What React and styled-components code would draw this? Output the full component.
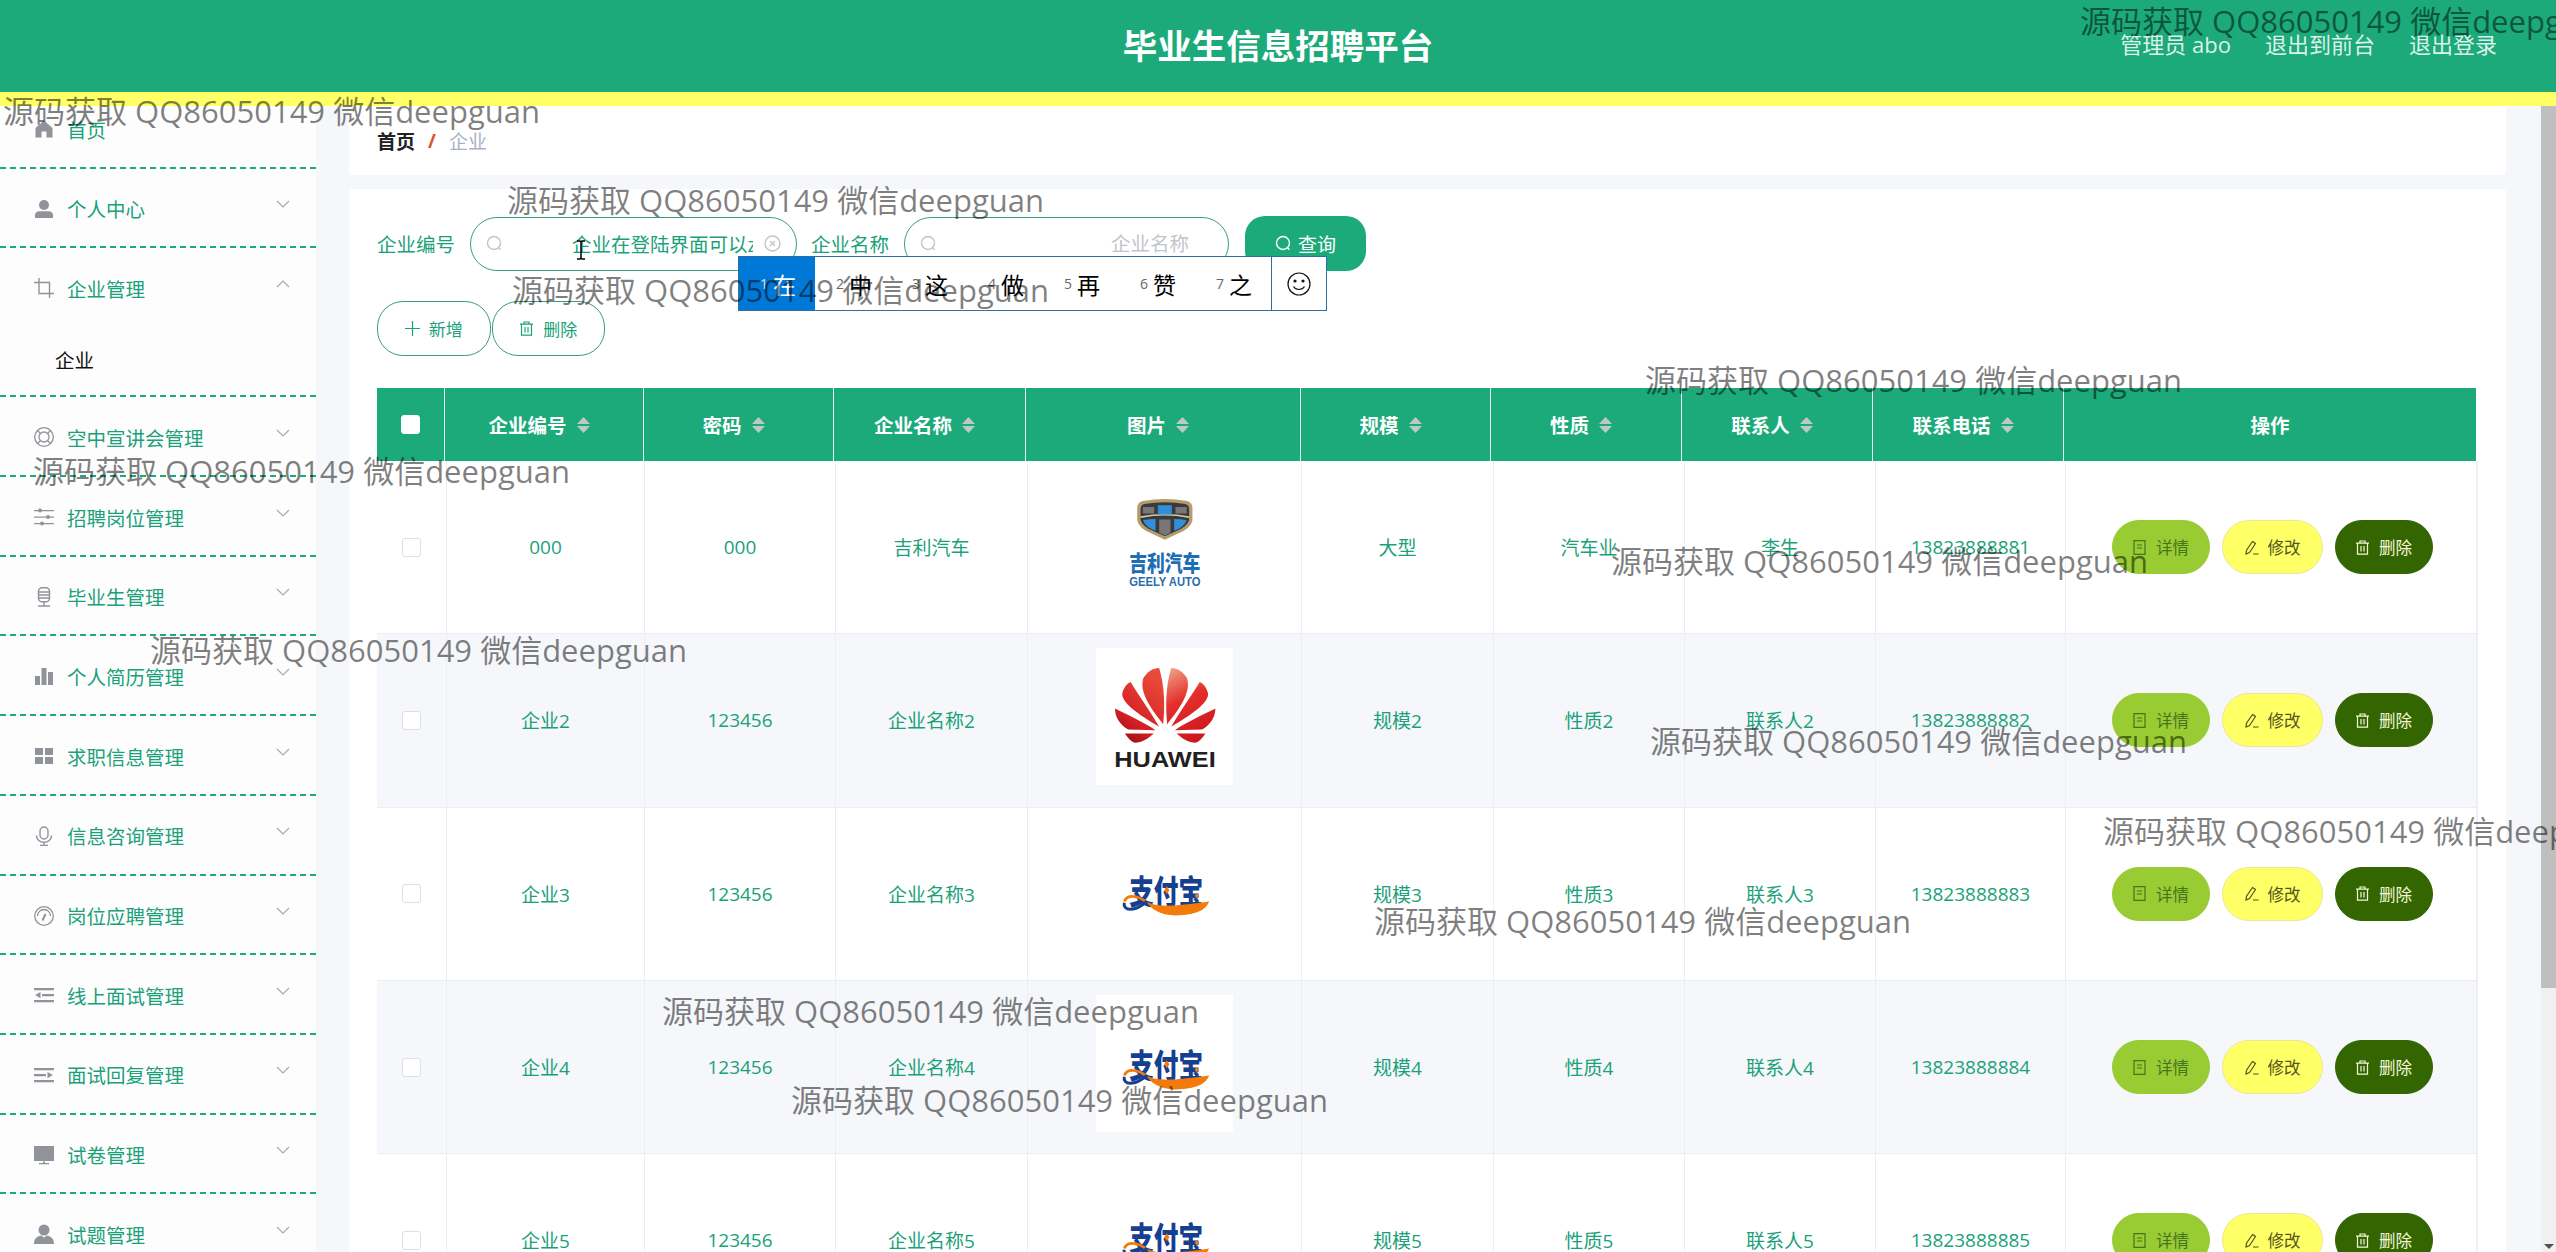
import React from 'react';
import styled, { createGlobalStyle } from 'styled-components';

const GREEN = '#1caa7a';
const TEXT_GREEN = '#1ba17a';
const FONT = '"Open Sans", "Noto Sans CJK SC", sans-serif';

const GlobalStyle = createGlobalStyle`
  html, body {
    margin: 0;
    height: 100%;
    overflow: hidden;
    font-family: ${FONT};
  }
`;

const Page = styled.div`
  position: relative;
  height: 100vh;
  overflow: hidden;
  display: flex;
  flex-direction: column;
  background: #f5f7fa;
`;

const Header = styled.header`
  position: relative;
  z-index: 2;
  flex: none;
  height: 92px;
  border-bottom: 14px solid #ffff66;
  background: ${GREEN};
  display: grid;
  grid-template-columns: 1fr auto 1fr;
  align-items: center;
`;

const Title = styled.h1`
  grid-column: 2;
  margin: 0;
  color: #fff;
  font-size: 34.5px;
  font-weight: 700;
  line-height: 1;
`;

const HeaderLinks = styled.nav`
  justify-self: end;
  display: flex;
  gap: 34px;
  padding: 0 59px 6px 0;
  color: rgba(255, 255, 255, 0.85);
  font-size: 22px;
`;

const Main = styled.div`
  flex: 1;
  min-height: 0;
  display: flex;
`;

const Sidebar = styled.aside`
  flex: none;
  width: 316px;
  margin-top: -17px;
  background: #fdfdfe;
  overflow: hidden;
`;

const MenuItem = styled.div`
  box-sizing: border-box;
  height: ${p => (p.$open ? 149 : 79.7)}px;
  border-bottom: 2px dashed ${GREEN};
  display: flex;
  flex-direction: column;
`;

const MenuRow = styled.div`
  flex: none;
  height: 78px;
  padding: 2px 26px 0 34px;
  box-sizing: border-box;
  display: flex;
  align-items: center;
  gap: 13px;
  color: ${TEXT_GREEN};
  font-size: 19.5px;
`;

const MenuLabel = styled.span`
  flex: 1;
`;

const MenuIcon = styled.svg`
  flex: none;
  width: 20px;
  height: 20px;
  color: #909399;
`;

const Chevron = styled.svg`
  flex: none;
  width: 14px;
  height: 8px;
  margin-top: -9px;
  fill: none;
  stroke: #a6a9ad;
  stroke-width: 1.2;
  transform: ${p => (p.$up ? 'rotate(180deg)' : 'none')};
`;

const SubItem = styled.div`
  padding-left: 55px;
  margin-top: 19px;
  color: #111;
  font-size: 19.5px;
`;

const Content = styled.main`
  flex: 1;
  min-width: 0;
  padding: 0 35px 0 33px;
  overflow: hidden;
`;

const Crumbs = styled.div`
  box-sizing: border-box;
  height: 69px;
  margin-bottom: 14px;
  padding: 0 28px 0 28px;
  background: #fff;
  border-radius: 4px;
  display: flex;
  align-items: center;
  gap: 13px;
  font-size: 19px;
`;

const CrumbHome = styled.span`
  color: #222;
  font-weight: 700;
`;

const CrumbSlash = styled.span`
  color: #d9532c;
  font-weight: 700;
`;

const CrumbHere = styled.span`
  color: #a8b2c5;
`;

const Card = styled.section`
  padding: 27px 28px 0 28px;
  background: #fff;
  border-radius: 4px;
`;

const SearchRow = styled.form`
  height: 55px;
  display: flex;
  align-items: center;
`;

const FieldLabel = styled.label`
  width: 78px;
  margin-right: 15px;
  color: ${TEXT_GREEN};
  font-size: 19.5px;
  white-space: nowrap;
`;

const SearchBox = styled.div`
  box-sizing: border-box;
  width: ${p => p.$width}px;
  height: 54px;
  margin-right: ${p => p.$gap}px;
  padding: 0 15px;
  display: flex;
  align-items: center;
  border: 1px solid #3b9c80;
  border-radius: 27px;
`;

const SearchInput = styled.input`
  flex: 1;
  min-width: 0;
  border: 0;
  outline: 0;
  padding: 0 0 0 ${p => p.$indent}px;
  margin-left: 0;
  background: transparent;
  color: ${TEXT_GREEN};
  font: 19.5px ${FONT};
  &::placeholder {
    color: #c0c4cc;
    opacity: 1;
  }
`;

const FieldIcon = styled.svg`
  flex: none;
  width: 17px;
  height: 17px;
  fill: none;
  stroke: #c0c4cc;
  stroke-width: 1.4;
`;

const ClearIcon = styled(FieldIcon)`
  margin-left: 11px;
`;

const SearchButton = styled.button`
  width: 121px;
  height: 55px;
  padding: 0;
  border: 0;
  border-radius: 20px;
  background: ${GREEN};
  color: #fff;
  font: 19px ${FONT};
  display: flex;
  align-items: center;
  justify-content: center;
  gap: 6px;
  svg {
    stroke: #fff;
  }
`;

const ActionRow = styled.div`
  height: 55px;
  margin-top: 30px;
  display: flex;
  gap: 1px;
`;

const OutlineButton = styled.button`
  width: 113.5px;
  height: 55px;
  padding: 0;
  border: 1px solid #3b9c80;
  border-radius: 26px;
  background: #fff;
  color: ${TEXT_GREEN};
  font: 17px ${FONT};
  display: flex;
  align-items: center;
  justify-content: center;
  gap: 9px;
`;

const Table = styled.div`
  margin-top: 32px;
`;

const HeadRow = styled.div`
  width: 2099px;
  height: 73px;
  display: grid;
  grid-template-columns: 68px 199px 190px 192px 275px 190px 191px 191px 191px 412px;
  background: ${GREEN};
`;

const HeadCell = styled.div`
  display: flex;
  align-items: center;
  justify-content: center;
  gap: 10px;
  padding-right: ${p => (p.$sorted ? 10 : 0)}px;
  color: #fff;
  font-size: 19.5px;
  font-weight: 700;
  border-right: ${p => (p.$last ? 0 : '1px solid #e4f5ef')};
`;

const BodyRow = styled.div`
  width: 2101px;
  height: 173.33px;
  box-sizing: border-box;
  display: grid;
  grid-template-columns: 70px 198px 191px 192px 274px 192px 191px 191px 190px 412px;
  background: ${p => (p.$even ? '#f5f7fb' : '#fff')};
  border-bottom: 1px solid #ebeef5;
  border-right: 2px solid #eef0f4;
`;

const BodyCell = styled.div`
  display: flex;
  align-items: center;
  justify-content: center;
  color: ${TEXT_GREEN};
  font-size: 19px;
  border-right: ${p => (p.$last ? 0 : '1px solid #ebeef5')};
`;

const Check = styled.span`
  box-sizing: border-box;
  width: 19px;
  height: 19px;
  border: 1px solid ${p => (p.$head ? '#fff' : '#dcdfe6')};
  border-radius: 3px;
  background: #fff;
`;

const SortIcon = styled.svg`
  flex: none;
  width: 13px;
  height: 16px;
  fill: #bccac4;
`;

const LogoFrame = styled.svg`
  width: 137px;
  height: 137px;
  margin-bottom: 8px;
  background: #fff;
`;

const RowActions = styled.div`
  display: flex;
  gap: 12px;
`;

const tones = {
  detail: { bg: '#99cc33', fg: '#47731f', line: '#99cc33', width: 98 },
  edit: { bg: '#ffff66', fg: '#55551f', line: '#ece79a', width: 101 },
  remove: { bg: '#336600', fg: '#f4f8d8', line: '#336600', width: 98 },
};

const Pill = styled.button`
  box-sizing: border-box;
  width: ${p => tones[p.$tone].width}px;
  height: 54px;
  padding: 0;
  border: 1px solid ${p => tones[p.$tone].line};
  border-radius: 27px;
  background: ${p => tones[p.$tone].bg};
  color: ${p => tones[p.$tone].fg};
  font: 16.5px ${FONT};
  display: flex;
  align-items: center;
  justify-content: center;
  gap: 9px;
`;

const SmallIcon = styled.svg`
  flex: none;
  width: 15px;
  height: 15px;
  fill: none;
  stroke: currentColor;
  stroke-width: 1.2;
`;

const Scrollbar = styled.div`
  flex: none;
  position: relative;
  width: 15px;
  background: #f0f0f0;
`;

const ScrollThumb = styled.div`
  height: 882px;
  background: #bfbfbf;
`;

const ScrollArrow = styled.span`
  position: absolute;
  left: 3px;
  bottom: 3px;
  border-left: 5px solid transparent;
  border-right: 5px solid transparent;
  border-top: 5px solid #505050;
`;

const Candidates = styled.div`
  position: absolute;
  z-index: 10;
  left: 738px;
  top: 256px;
  box-sizing: border-box;
  width: 589px;
  height: 55px;
  display: flex;
  background: #fff;
  border: 1px solid #2f6f9f;
`;

const Candidate = styled.div`
  flex: none;
  width: 76px;
  display: flex;
  align-items: center;
  padding-left: 21px;
  box-sizing: border-box;
  gap: 3px;
  background: ${p => (p.$active ? '#0078d7' : 'transparent')};
  color: ${p => (p.$active ? '#fff' : '#000')};
  font-size: 23px;
`;

const CandidateNo = styled.span`
  width: 10px;
  color: ${p => (p.$active ? '#cfe4f7' : '#666')};
  font-size: 14px;
`;

const EmojiCell = styled.div`
  flex: 1;
  display: flex;
  align-items: center;
  justify-content: center;
  border-left: 1px solid #2f6f9f;
`;

const Watermark = styled.div`
  position: absolute;
  z-index: 20;
  left: ${p => p.$x}px;
  top: ${p => p.$y - 21}px;
  color: rgba(0, 0, 0, 0.5);
  font-size: 31px;
  line-height: 42px;
  white-space: nowrap;
  pointer-events: none;
`;

const TextCursor = styled.svg`
  position: absolute;
  z-index: 21;
  left: 576px;
  top: 240px;
  width: 10px;
  height: 20px;
`;

const icons = {
  home: <path fill="currentColor" d="M10 1.5 1.5 9v9.5h6v-6h5v6h6V9z" />,
  user: <g fill="currentColor"><circle cx="10" cy="6" r="5" /><path d="M1 19v-3c0-2.5 2-3.8 4.5-3.8h9c2.5 0 4.5 1.300 4.500 3.800v3z" /></g>,
  crop: <path fill="none" stroke="currentColor" strokeWidth="1.400" d="M5 0v15.500h15M0 4.500h15.500V20" />,
  help: <g fill="none" stroke="currentColor" strokeWidth="1.300"><circle cx="10" cy="10" r="9.300" /><circle cx="10" cy="10" r="5" /><path d="m3.500 3.500 3 3m7 7 3 3m0-13-3 3m-7 7-3 3" /></g>,
  sliders: <g fill="currentColor"><path d="M0 3h20v1.200H0zM0 9.500h20v1.200H0zM0 16h20v1.200H0z" /><circle cx="6" cy="3.600" r="2" /><circle cx="14" cy="10.100" r="2" /><circle cx="8" cy="16.600" r="2" /></g>,
  record: <g fill="none" stroke="currentColor" strokeWidth="1.400"><rect x="4.500" y="0.800" width="11" height="14" rx="3.500" /><path d="M4.500 5h11M4.500 8h11M4.500 11h11M10 15v3.500M4 19h12" /></g>,
  chart: <path fill="currentColor" d="M1 10h5v9H1zM7.500 2h5v17h-5zM14 6h5v13h-5z" />,
  grid: <path fill="currentColor" d="M1 2h8v7H1zM11 2h8v7h-8zM1 11h8v7H1zM11 11h8v7h-8z" />,
  mic: <g fill="none" stroke="currentColor" strokeWidth="1.400"><rect x="6" y="1" width="8" height="12" rx="4" /><path d="M2.500 9.500c0 9 15 9 15 0M10 16v3.500M6 19.500h8" /></g>,
  gauge: <g fill="none" stroke="currentColor" strokeWidth="1.300"><circle cx="10" cy="10" r="9.300" /><path d="M3.500 10A6.500 6.500 0 0 1 16.500 10" /><path strokeWidth="2" d="M8.500 14.500 11.500 8" /></g>,
  fold: <path fill="currentColor" d="M0 3h20v2.200H0zM8 9h12v2.200H8zM0 15h20v2.200H0zM1 10.100 6.500 7v6.200z" />,
  unfold: <path fill="currentColor" d="M0 3h20v2.200H0zM0 9h12v2.200H0zM0 15h20v2.200H0zM19 10.100 13.500 7v6.200z" />,
  monitor: <path fill="currentColor" d="M0 1h20v15H0zM9 16.500h2V18h4v1.200H5V18h4z" />,
  person: <g fill="currentColor"><circle cx="10" cy="6" r="5.500" /><path d="M0 20c0-5 2-7 7-8.500l3 2 3-2c5 1.500 7 3.500 7 8.500z" /></g>,
};

const menu = [
  ['home', '首页', false],
  ['user', '个人中心', true],
  ['crop', '企业管理', true, true],
  ['help', '空中宣讲会管理', true],
  ['sliders', '招聘岗位管理', true],
  ['record', '毕业生管理', true],
  ['chart', '个人简历管理', true],
  ['grid', '求职信息管理', true],
  ['mic', '信息咨询管理', true],
  ['gauge', '岗位应聘管理', true],
  ['fold', '线上面试管理', true],
  ['unfold', '面试回复管理', true],
  ['monitor', '试卷管理', true],
  ['person', '试题管理', true],
];

const headers = ['企业编号', '密码', '企业名称', '图片', '规模', '性质', '联系人', '联系电话'];

const rows = [
  { id: '000', pwd: '000', name: '吉利汽车', logo: 'geely', size: '大型', kind: '汽车业', contact: '李生', phone: '13823888881' },
  { id: '企业2', pwd: '123456', name: '企业名称2', logo: 'huawei', size: '规模2', kind: '性质2', contact: '联系人2', phone: '13823888882' },
  { id: '企业3', pwd: '123456', name: '企业名称3', logo: 'alipay', size: '规模3', kind: '性质3', contact: '联系人3', phone: '13823888883' },
  { id: '企业4', pwd: '123456', name: '企业名称4', logo: 'alipay', size: '规模4', kind: '性质4', contact: '联系人4', phone: '13823888884' },
  { id: '企业5', pwd: '123456', name: '企业名称5', logo: 'alipay', size: '规模5', kind: '性质5', contact: '联系人5', phone: '13823888885' },
];

const marks = [
  [2080, 21], [3, 111], [507, 200], [512, 290], [1645, 380], [33, 471], [1611, 561],
  [150, 650], [1650, 741], [2103, 831], [1374, 921], [662, 1011], [791, 1100],
];

const SearchGlyph = () => (
  <FieldIcon viewBox="0 0 17 17"><circle cx="8" cy="8" r="6.500" /><path d="m12.500 12.800 2 2" /></FieldIcon>
);

const TrashGlyph = () => (
  <SmallIcon viewBox="0 0 15 15"><path d="M1 3.200h13M5 3V1h5v2M2.500 3.200v11h10v-11M6 6v5.500M9 6v5.500" /></SmallIcon>
);

const HuaweiPetals = () => (
  <>
    <path d="M490 1062C440 1000 420 960 430 925c10-20 30-32 48-32 17 57 17 117 12 169z" />
    <path d="M478 1070C420 1035 365 1000 367 970c3-15 13-30 25-35 28 45 63 95 86 135z" />
    <path d="M467 1080C430 1055 385 1035 345 1015c0 25 15 50 40 63z" />
    <path d="M375 1090h87c-17 15-37 28-57 28-10-3-20-13-30-28z" />
  </>
);

const HuaweiLogo = () => (
  <LogoFrame viewBox="0 0 412 412">
    <defs>
      <linearGradient id="hwLeft" gradientUnits="userSpaceOnUse" x1="350" y1="1110" x2="480" y2="930">
        <stop offset="0" stopColor="#8f0c12" />
        <stop offset="0.35" stopColor="#d51f26" />
        <stop offset="1" stopColor="#ea4a3a" />
      </linearGradient>
      <linearGradient id="hwRight" gradientUnits="userSpaceOnUse" x1="370" y1="1110" x2="480" y2="900">
        <stop offset="0" stopColor="#c9151c" />
        <stop offset="0.6" stopColor="#e42f2c" />
        <stop offset="1" stopColor="#ef9a80" />
      </linearGradient>
    </defs>
    <g transform="translate(-288 -833)">
      <g fill="url(#hwLeft)"><HuaweiPetals /></g>
      <g fill="url(#hwRight)" transform="translate(992 0) scale(-1 1)"><HuaweiPetals /></g>
    </g>
    <text x="55" y="359" fontFamily="Liberation Sans" fontWeight="700" fontSize="64" textLength="305" lengthAdjust="spacingAndGlyphs" fill="#231f20">HUAWEI</text>
  </LogoFrame>
);

const GeelyLogo = () => (
  <LogoFrame viewBox="0 0 412 412">
    <g transform="translate(0 12)">
      <path fill="#b59c6c" d="M140 66q67-12 134 0 16 4 16 22v37q-5 25-45 40l-38 18-38-18q-40-15-45-40V88q0-18 16-22z" />
      <path fill="#3a3a3c" d="M145 75q62-10 124 0 11 3 11 15v33q-5 20-40 34l-33 15-33-15q-35-14-40-34V90q0-12 11-15z" />
      <path fill="#d9c89f" d="M134 112q73-14 146 0v5q-73-14-146 0z" />
      <path fill="#77777a" d="M141 84h34v20h-34zM239 84h34v20h-34zM190 122h34v40l-17 8-17-8z" />
      <path fill="#2f8fd8" d="M186 79h42v28h-42zM141 124q18-4 38-4v36q-28-10-38-32zM273 124q-18-4-38-4v36q28-10 38-32z" />
      <text x="100" y="276" fontFamily="Noto Sans CJK SC" fontWeight="900" fontSize="64" textLength="214" lengthAdjust="spacingAndGlyphs" fill="#1f6db3">吉利汽车</text>
      <text x="100" y="321" fontFamily="Liberation Sans" fontWeight="700" fontSize="38" textLength="214" lengthAdjust="spacingAndGlyphs" fill="#2a6cab">GEELY AUTO</text>
    </g>
  </LogoFrame>
);

const AlipayLogo = () => (
  <LogoFrame viewBox="0 0 412 412">
    <text x="100" y="250" fontFamily="Noto Sans CJK SC" fontWeight="900" fontSize="100" textLength="222" lengthAdjust="spacingAndGlyphs" fill="#15408f">支付宝</text>
    <g transform="translate(0 14)">
      <path fill="#f47a0a" d="M150 226c25 20 80 18 190 2-10 27-40 40-100 42-50 0-75-20-90-44z" />
      <path fill="none" stroke="#f47a0a" strokeWidth="8" d="M150 228c-20-15-55-25-65 0" />
      <path fill="none" stroke="#15408f" strokeWidth="9" d="M85 232c-5 23 30 30 68-4" />
      <path fill="#f47a0a" d="M213 182l8 12-8 12-8-12zM303 202l6 9-6 9-6-9z" />
    </g>
  </LogoFrame>
);

const logos = { geely: GeelyLogo, huawei: HuaweiLogo, alipay: AlipayLogo };

const App = () => (
  <Page>
    <GlobalStyle />
    <Header>
      <Title>毕业生信息招聘平台</Title>
      <HeaderLinks>
        <span>管理员 abo</span>
        <span>退出到前台</span>
        <span>退出登录</span>
      </HeaderLinks>
    </Header>
    <Main>
      <Sidebar>
        {menu.map(([icon, label, hasArrow, open]) => (
          <MenuItem key={label} $open={open}>
            <MenuRow>
              <MenuIcon viewBox="0 0 20 20">{icons[icon]}</MenuIcon>
              <MenuLabel>{label}</MenuLabel>
              {hasArrow && (
                <Chevron viewBox="0 0 14 8" $up={open}><path d="m1 1 6 6 6-6" /></Chevron>
              )}
            </MenuRow>
            {open && <SubItem>企业</SubItem>}
          </MenuItem>
        ))}
      </Sidebar>
      <Content>
        <Crumbs>
          <CrumbHome>首页</CrumbHome>
          <CrumbSlash>/</CrumbSlash>
          <CrumbHere>企业</CrumbHere>
        </Crumbs>
        <Card>
          <SearchRow>
            <FieldLabel>企业编号</FieldLabel>
            <SearchBox $width={327} $gap={14}>
              <SearchGlyph />
              <SearchInput $indent={69} readOnly value="企业在登陆界面可以z" />
              <ClearIcon viewBox="0 0 17 17">
                <circle cx="8.500" cy="8.500" r="7.500" />
                <path d="m6 6 5 5m0-5-5 5" />
              </ClearIcon>
            </SearchBox>
            <FieldLabel>企业名称</FieldLabel>
            <SearchBox $width={325} $gap={16}>
              <SearchGlyph />
              <SearchInput $indent={174} readOnly placeholder="企业名称" />
            </SearchBox>
            <SearchButton type="button"><SearchGlyph />查询</SearchButton>
          </SearchRow>
          <ActionRow>
            <OutlineButton>
              <SmallIcon viewBox="0 0 15 15"><path d="M7.500 0v15M0 7.500h15" /></SmallIcon>
              新增
            </OutlineButton>
            <OutlineButton><TrashGlyph />删除</OutlineButton>
          </ActionRow>
          <Table>
            <HeadRow>
              <HeadCell><Check $head /></HeadCell>
              {headers.map(h => (
                <HeadCell key={h} $sorted>
                  {h}
                  <SortIcon viewBox="0 0 13 16"><path d="M6.500 0 13 7H0zM0 9h13l-6.500 7z" /></SortIcon>
                </HeadCell>
              ))}
              <HeadCell $last>操作</HeadCell>
            </HeadRow>
            {rows.map((r, i) => {
              const Logo = logos[r.logo];
              return (
                <BodyRow key={r.phone} $even={i % 2 === 1}>
                  <BodyCell><Check /></BodyCell>
                  <BodyCell>{r.id}</BodyCell>
                  <BodyCell>{r.pwd}</BodyCell>
                  <BodyCell>{r.name}</BodyCell>
                  <BodyCell><Logo /></BodyCell>
                  <BodyCell>{r.size}</BodyCell>
                  <BodyCell>{r.kind}</BodyCell>
                  <BodyCell>{r.contact}</BodyCell>
                  <BodyCell>{r.phone}</BodyCell>
                  <BodyCell $last>
                    <RowActions>
                      <Pill $tone="detail">
                        <SmallIcon viewBox="0 0 15 15"><path d="M2 .6h11v13.800H2zM5 5h5M5 8h5" /></SmallIcon>
                        详情
                      </Pill>
                      <Pill $tone="edit">
                        <SmallIcon viewBox="0 0 15 15"><path d="m8.500 1.500 3 2-6 9-3.500 1.500.500-3.800zM9 14h5.500" /></SmallIcon>
                        修改
                      </Pill>
                      <Pill $tone="remove"><TrashGlyph />删除</Pill>
                    </RowActions>
                  </BodyCell>
                </BodyRow>
              );
            })}
          </Table>
        </Card>
      </Content>
      <Scrollbar>
        <ScrollThumb />
        <ScrollArrow />
      </Scrollbar>
    </Main>

    <Candidates>
      {['在', '中', '这', '做', '再', '赞', '之'].map((c, i) => (
        <Candidate key={c} $active={i === 0}>
          <CandidateNo $active={i === 0}>{i + 1}</CandidateNo>
          {c}
        </Candidate>
      ))}
      <EmojiCell>
        <svg width="24" height="24" viewBox="0 0 24 24" fill="none" stroke="#111" strokeWidth="1.200">
          <circle cx="12" cy="12" r="11" />
          <circle cx="8" cy="9" r="1" fill="#111" />
          <circle cx="16" cy="9" r="1" fill="#111" />
          <path d="M6.500 14.500c2.500 4 8.500 4 11 0" />
        </svg>
      </EmojiCell>
    </Candidates>

    {marks.map(([x, y]) => (
      <Watermark key={x} $x={x} $y={y}>源码获取 QQ86050149 微信deepguan</Watermark>
    ))}
    <TextCursor viewBox="0 0 10 20">
      <path fill="none" stroke="#000" strokeWidth="1.500" d="M1 1h3l1 1 1-1h3M5 2v16M1 19h3l1-1 1 1h3" />
    </TextCursor>
  </Page>
);

export default App;
